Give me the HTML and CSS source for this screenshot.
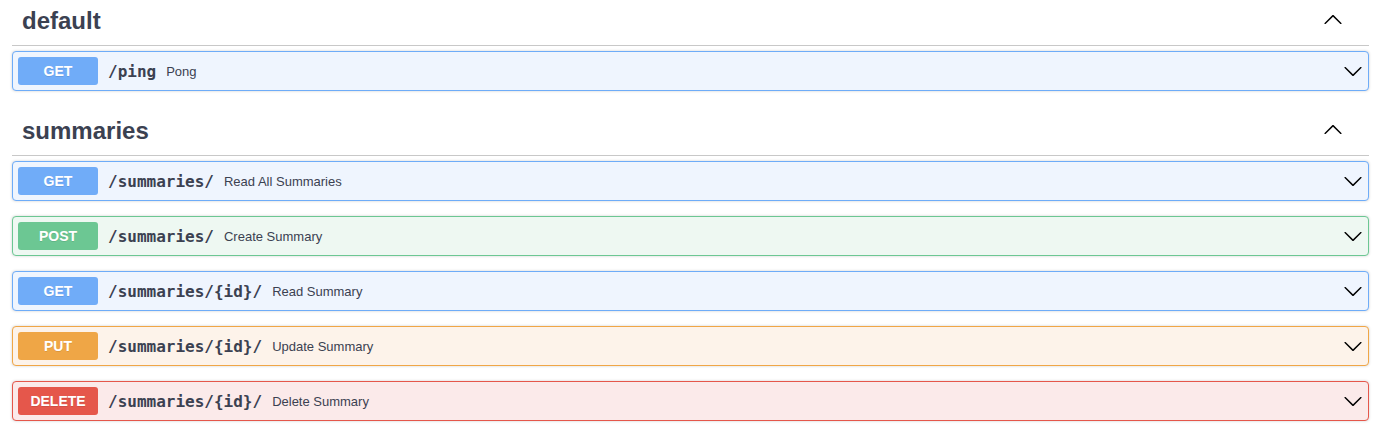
FILE: index.html
```html
<!DOCTYPE html>
<html lang="en">
<head>
<meta charset="utf-8">
<title>API docs</title>
<link rel="stylesheet" href="styles.css">
</head>
<body>
<div class="wrapper">
  <section class="tag-section">
    <h3 class="tag">
      <span class="tag-name">default</span>
      <button class="expand" aria-label="Collapse">
        <svg class="arrow" width="20" height="20" viewBox="0 0 20 20"><path d="M17.418 14.908c.272.268.709.268.979 0s.271-.701 0-.969l-7.908-7.83c-.27-.268-.707-.268-.979 0l-7.908 7.83c-.27.268-.27.701 0 .969.271.268.709.268.979 0L10 7.767l7.418 7.141z"/></svg>
      </button>
    </h3>
    <div class="opblock get">
      <span class="method">GET</span>
      <span class="path">/ping</span>
      <span class="desc">Pong</span>
      <svg class="arrow down" width="20" height="20" viewBox="0 0 20 20"><path d="M17.418 6.109c.272-.268.709-.268.979 0s.271.701 0 .969l-7.908 7.83c-.27.268-.707.268-.979 0l-7.908-7.830c-.27-.268-.27-.701 0-.969.271-.268.709-.268.979 0L10 13.25l7.418-7.141z"/></svg>
    </div>
  </section>

  <section class="tag-section">
    <h3 class="tag">
      <span class="tag-name">summaries</span>
      <button class="expand" aria-label="Collapse">
        <svg class="arrow" width="20" height="20" viewBox="0 0 20 20"><path d="M17.418 14.908c.272.268.709.268.979 0s.271-.701 0-.969l-7.908-7.83c-.27-.268-.707-.268-.979 0l-7.908 7.83c-.27.268-.27.701 0 .969.271.268.709.268.979 0L10 7.767l7.418 7.141z"/></svg>
      </button>
    </h3>
    <div class="opblock get">
      <span class="method">GET</span>
      <span class="path">/summaries/</span>
      <span class="desc">Read All Summaries</span>
      <svg class="arrow down" width="20" height="20" viewBox="0 0 20 20"><path d="M17.418 6.109c.272-.268.709-.268.979 0s.271.701 0 .969l-7.908 7.83c-.27.268-.707.268-.979 0l-7.908-7.83c-.27-.268-.27-.701 0-.969.271-.268.709-.268.979 0L10 13.25l7.418-7.141z"/></svg>
    </div>
    <div class="opblock post">
      <span class="method">POST</span>
      <span class="path">/summaries/</span>
      <span class="desc">Create Summary</span>
      <svg class="arrow down" width="20" height="20" viewBox="0 0 20 20"><path d="M17.418 6.109c.272-.268.709-.268.979 0s.271.701 0 .969l-7.908 7.83c-.27.268-.707.268-.979 0l-7.908-7.83c-.27-.268-.27-.701 0-.969.271-.268.709-.268.979 0L10 13.25l7.418-7.141z"/></svg>
    </div>
    <div class="opblock get">
      <span class="method">GET</span>
      <span class="path">/summaries/{id}/</span>
      <span class="desc">Read Summary</span>
      <svg class="arrow down" width="20" height="20" viewBox="0 0 20 20"><path d="M17.418 6.109c.272-.268.709-.268.979 0s.271.701 0 .969l-7.908 7.83c-.27.268-.707.268-.979 0l-7.908-7.83c-.27-.268-.27-.701 0-.969.271-.268.709-.268.979 0L10 13.25l7.418-7.141z"/></svg>
    </div>
    <div class="opblock put">
      <span class="method">PUT</span>
      <span class="path">/summaries/{id}/</span>
      <span class="desc">Update Summary</span>
      <svg class="arrow down" width="20" height="20" viewBox="0 0 20 20"><path d="M17.418 6.109c.272-.268.709-.268.979 0s.271.701 0 .969l-7.908 7.83c-.27.268-.707.268-.979 0l-7.908-7.83c-.27-.268-.27-.701 0-.969.271-.268.709-.268.979 0L10 13.25l7.418-7.141z"/></svg>
    </div>
    <div class="opblock delete">
      <span class="method">DELETE</span>
      <span class="path">/summaries/{id}/</span>
      <span class="desc">Delete Summary</span>
      <svg class="arrow down" width="20" height="20" viewBox="0 0 20 20"><path d="M17.418 6.109c.272-.268.709-.268.979 0s.271.701 0 .969l-7.908 7.83c-.27.268-.707.268-.979 0l-7.908-7.83c-.27-.268-.27-.701 0-.969.271-.268.709-.268.979 0L10 13.25l7.418-7.141z"/></svg>
    </div>
  </section>
</div>
</body>
</html>
```

FILE: styles.css
```css
html, body {
  margin: 0;
  padding: 0;
  background: #fff;
}

body {
  font-family: "Liberation Sans", Arial, sans-serif;
  color: #3b4151;
}

.wrapper {
  padding: 0 12px;
  margin-top: -4px;
}

.tag-section {
  display: flex;
  flex-direction: column;
}

.tag {
  display: flex;
  align-items: center;
  height: 29px;
  margin: 0 0 5px;
  padding: 10px 20px 10px 10px;
  border-bottom: 1px solid #c8c8c8;
  font-size: 24px;
  line-height: 29px;
  font-weight: 700;
  color: #3b4151;
}

.tag-name {
  flex: 1;
}

.expand {
  display: flex;
  align-items: center;
  padding: 1px 6px;
  margin: 0 0 4px;
  border: none;
  background: none;
  cursor: pointer;
}

.arrow {
  display: block;
  fill: #000;
}

.opblock {
  display: flex;
  align-items: center;
  height: 28px;
  padding: 5px;
  margin: 0 0 15px;
  border: 1px solid;
  border-radius: 4px;
  box-shadow: 0 0 3px rgba(0, 0, 0, 0.19);
}

.method {
  min-width: 80px;
  height: 28px;
  line-height: 28px;
  border-radius: 3px;
  font-size: 14px;
  font-weight: 700;
  color: #fff;
  text-align: center;
  text-shadow: 0 1px 0 rgba(0, 0, 0, 0.1);
}

.path {
  padding: 0 10px;
  font-family: "DejaVu Sans Mono", monospace;
  font-size: 16px;
  font-weight: 700;
  color: #3b4151;
}

.desc {
  flex: 1;
  font-size: 13px;
  color: #3b4151;
}

.get {
  background: #eff5fe;
  border-color: #6eacf8;
}
.get .method { background: #70acf8; }

.post {
  background: #eef8f2;
  border-color: #6cc793;
}
.post .method { background: #6cc793; }

.put {
  background: #fdf3ea;
  border-color: #f0a646;
}
.put .method { background: #efa646; }

.delete {
  background: #fbeaea;
  border-color: #e5574b;
}
.delete .method { background: #e5574b; }
```
